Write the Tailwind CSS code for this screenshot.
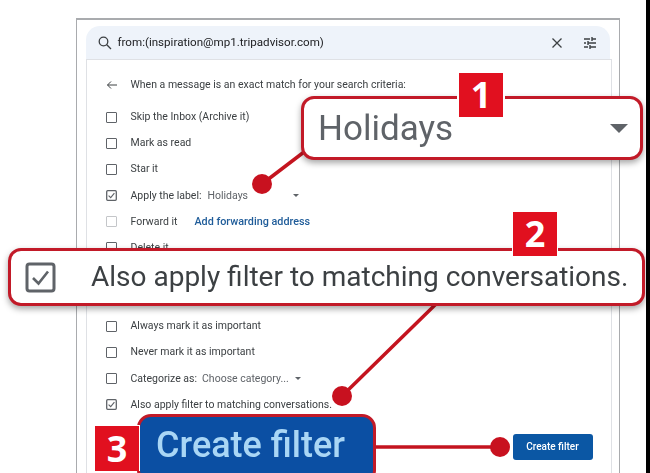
<!DOCTYPE html>
<html lang="en">
<head>
  <meta charset="UTF-8">
  <title>Create filter</title>
  <script src="https://cdn.jsdelivr.net/npm/@tailwindcss/browser@4"></script>
</head>
<body class="bg-black">
  <div class="relative w-[646px] h-[473px] overflow-hidden bg-white font-['Roboto',sans-serif] text-[#3c4043]">

    <!-- Gmail filter dialog -->
    <div class="ml-[76px] mt-[18px] w-[544px] h-[470px] border-x-[1.5px] border-t-2 border-[#a9abae] pl-[8.5px] pt-[6px] bg-white blur-[0.35px]">
      <div class="flex items-center h-[33px] w-[524px] rounded-t-[14px] bg-[#eef3fa] pl-[11px] pr-[13px] text-[11.6px] text-[#202124]">
        <svg class="w-[16px] h-[16px]" viewBox="0 0 16 16" fill="none" stroke="#3c4043" stroke-width="1.3"><circle cx="6.5" cy="6.5" r="4.3"/><path d="M9.8 9.8 14 14"/></svg>
        <span class="ml-[5px]">from:(inspiration@mp1.tripadvisor.com)</span>
        <svg class="ml-auto w-[12px] h-[12px]" viewBox="0 0 12 12" fill="none" stroke="#3c4043" stroke-width="1.3"><path d="M1.5 1.5 10.5 10.5M10.5 1.5 1.5 10.5"/></svg>
        <svg class="ml-[20px] w-[14px] h-[14px]" viewBox="0 0 14 14" fill="none" stroke="#3c4043" stroke-width="1.4"><path d="M1 3h6M9 3h4M9 1v4M1 7h2M5 7h8M5 5v4M1 11h4M7 11h6M7 9v4"/></svg>
      </div>

      <div class="w-[526px] h-[420px] border border-[#dfe1e5] pt-[12px] text-[10.5px]">
        <div class="flex items-center h-[26px] pl-[19px]">
          <svg class="w-[12px] h-[12px]" viewBox="0 0 12 12" fill="none" stroke="#3c4043" stroke-width="1"><path d="M11 6H1.5M5 2.5 1.5 6 5 9.5"/></svg>
          <span class="ml-[13px]">When a message is an exact match for your search criteria:</span>
        </div>

        <div class="mt-[6px]">
          <div class="flex items-center h-[26.15px] pl-[19px]">
            <span class="w-[11px] h-[11px] border-[1.5px] border-[#5f6368] rounded-[1px]"></span>
            <span class="ml-[14px]">Skip the Inbox (Archive it)</span>
          </div>
          <div class="flex items-center h-[26.15px] pl-[19px]">
            <span class="w-[11px] h-[11px] border-[1.5px] border-[#5f6368] rounded-[1px]"></span>
            <span class="ml-[14px]">Mark as read</span>
          </div>
          <div class="flex items-center h-[26.15px] pl-[19px]">
            <span class="w-[11px] h-[11px] border-[1.5px] border-[#5f6368] rounded-[1px]"></span>
            <span class="ml-[14px]">Star it</span>
          </div>
          <div class="flex items-center h-[26.15px] pl-[19px]">
            <svg class="w-[11px] h-[11px]" viewBox="0 0 11 11" fill="none" stroke="#5f6368"><rect x=".7" y=".7" width="9.6" height="9.6" rx="1" stroke-width="1.3"/><path d="M2.6 5.6 4.7 7.7 8.4 3.2" stroke-width="1.1"/></svg>
            <span class="ml-[14px]">Apply the label:</span>
            <span class="ml-[6px] text-[#5f6368]">Holidays</span>
            <span class="ml-[45px] border-x-[3px] border-t-[3px] border-x-transparent border-t-[#5f6368]"></span>
          </div>
          <div class="flex items-center h-[26.15px] pl-[19px]">
            <span class="w-[11px] h-[11px] border-[1.5px] border-[#c4c6c9] rounded-[1px]"></span>
            <span class="ml-[14px]">Forward it</span>
            <span class="ml-[17px] text-[10.8px] font-medium text-[#1f5c99]">Add forwarding address</span>
          </div>
          <div class="flex items-center h-[26.15px] pl-[19px]">
            <span class="w-[11px] h-[11px] border-[1.5px] border-[#5f6368] rounded-[1px]"></span>
            <span class="ml-[14px]">Delete it</span>
          </div>
          <div class="h-[52.3px]"></div>
          <div class="flex items-center h-[26.15px] pl-[19px]">
            <span class="w-[11px] h-[11px] border-[1.5px] border-[#5f6368] rounded-[1px]"></span>
            <span class="ml-[14px]">Always mark it as important</span>
          </div>
          <div class="flex items-center h-[26.15px] pl-[19px]">
            <span class="w-[11px] h-[11px] border-[1.5px] border-[#5f6368] rounded-[1px]"></span>
            <span class="ml-[14px]">Never mark it as important</span>
          </div>
          <div class="flex items-center h-[26.15px] pl-[19px]">
            <span class="w-[11px] h-[11px] border-[1.5px] border-[#5f6368] rounded-[1px]"></span>
            <span class="ml-[14px]">Categorize as:</span>
            <span class="ml-[5px] text-[#5f6368]">Choose category...</span>
            <span class="ml-[6px] border-x-[3px] border-t-[3px] border-x-transparent border-t-[#5f6368]"></span>
          </div>
          <div class="flex items-center h-[26.15px] pl-[19px]">
            <svg class="w-[11px] h-[11px]" viewBox="0 0 11 11" fill="none" stroke="#5f6368"><rect x=".7" y=".7" width="9.6" height="9.6" rx="1" stroke-width="1.3"/><path d="M2.6 5.6 4.7 7.7 8.4 3.2" stroke-width="1.1"/></svg>
            <span class="ml-[14px]">Also apply filter to matching conversations.</span>
          </div>
        </div>

        <div class="flex justify-end pr-[18px] mt-[16px]">
          <span class="flex items-center justify-center w-[80px] h-[26px] rounded-[3px] bg-[#0b57a4] text-white text-[10px] font-medium">Create filter</span>
        </div>
      </div>
    </div>

    <!-- connector lines and dots -->
    <svg class="absolute left-0 top-0 w-[646px] h-[473px]" viewBox="0 0 646 473" fill="none" stroke="#c4141f" stroke-width="3.5">
      <path d="M304 152 262 184M436 304 342 396M375 447H500"/>
      <g fill="#c8111f" stroke="none">
        <ellipse cx="262" cy="184" rx="10" ry="10"/>
        <ellipse cx="342" cy="396" rx="10" ry="10"/>
        <ellipse cx="500" cy="447" rx="10" ry="10"/>
      </g>
    </svg>

    <!-- callout 1 -->
    <div class="absolute left-[301px] top-[96px] w-[342px] h-[64px] flex items-center justify-between rounded-[13px] border-[3px] border-[#c21a28] bg-white pl-[14px] pr-[12px] shadow-[0_3px_6px_rgba(0,0,0,0.35)] text-[#5f6368]">
      <span class="text-[35px] leading-none blur-[0.6px]">Holidays</span>
      <span class="border-x-[9px] border-t-[9px] border-x-transparent border-t-[#5f6368] blur-[0.5px]"></span>
    </div>
    <div class="absolute left-[457px] top-[73px] w-[48px] h-[44px] flex items-center justify-center bg-white">
      <span class="flex items-center justify-center w-[44px] h-[44px] bg-[#e1101f] text-white text-[36px] font-bold font-['Open_Sans',sans-serif]">1</span>
    </div>

    <!-- callout 2 -->
    <div class="absolute left-[8px] top-[248px] w-[637px] h-[58px] flex items-center rounded-[13px] border-[3px] border-[#c21a28] bg-white pl-[14px] shadow-[0_3px_6px_rgba(0,0,0,0.35)] text-[#3c4043]">
      <svg class="w-[31px] h-[31px] shrink-0" viewBox="0 0 31 31" fill="none" stroke="#5f6368"><rect x="2" y="2" width="27" height="27" rx="2.5" stroke-width="3"/><path d="M8 16 13.5 21.5 23 9.5" stroke-width="2.6"/></svg>
      <span class="ml-[35px] text-[28px] leading-none whitespace-nowrap blur-[0.4px]">Also apply filter to matching conversations.</span>
    </div>
    <div class="absolute left-[512px] top-[212px] w-[46px] h-[44px] flex items-center justify-center bg-white">
      <span class="flex items-center justify-center w-[44px] h-[44px] bg-[#e1101f] text-white text-[36px] font-bold font-['Open_Sans',sans-serif]">2</span>
    </div>

    <!-- callout 3 -->
    <div class="absolute left-[137px] top-[414px] w-[239px] h-[70px] rounded-[14px] border-[3px] border-[#c21a28] bg-[#0b4fa3] pl-[16px] pt-[9px] text-[#a9d6f5] text-[36px] font-medium leading-[38px] whitespace-nowrap">
      <span class="blur-[0.6px]">Create filter</span>
    </div>
    <div class="absolute left-[95px] top-[425px] w-[45px] h-[46px] flex items-center justify-center bg-[#e1101f] text-white text-[36px] font-bold font-['Open_Sans',sans-serif] border-r border-t border-white">3</div>
  </div>
</body>
</html>
